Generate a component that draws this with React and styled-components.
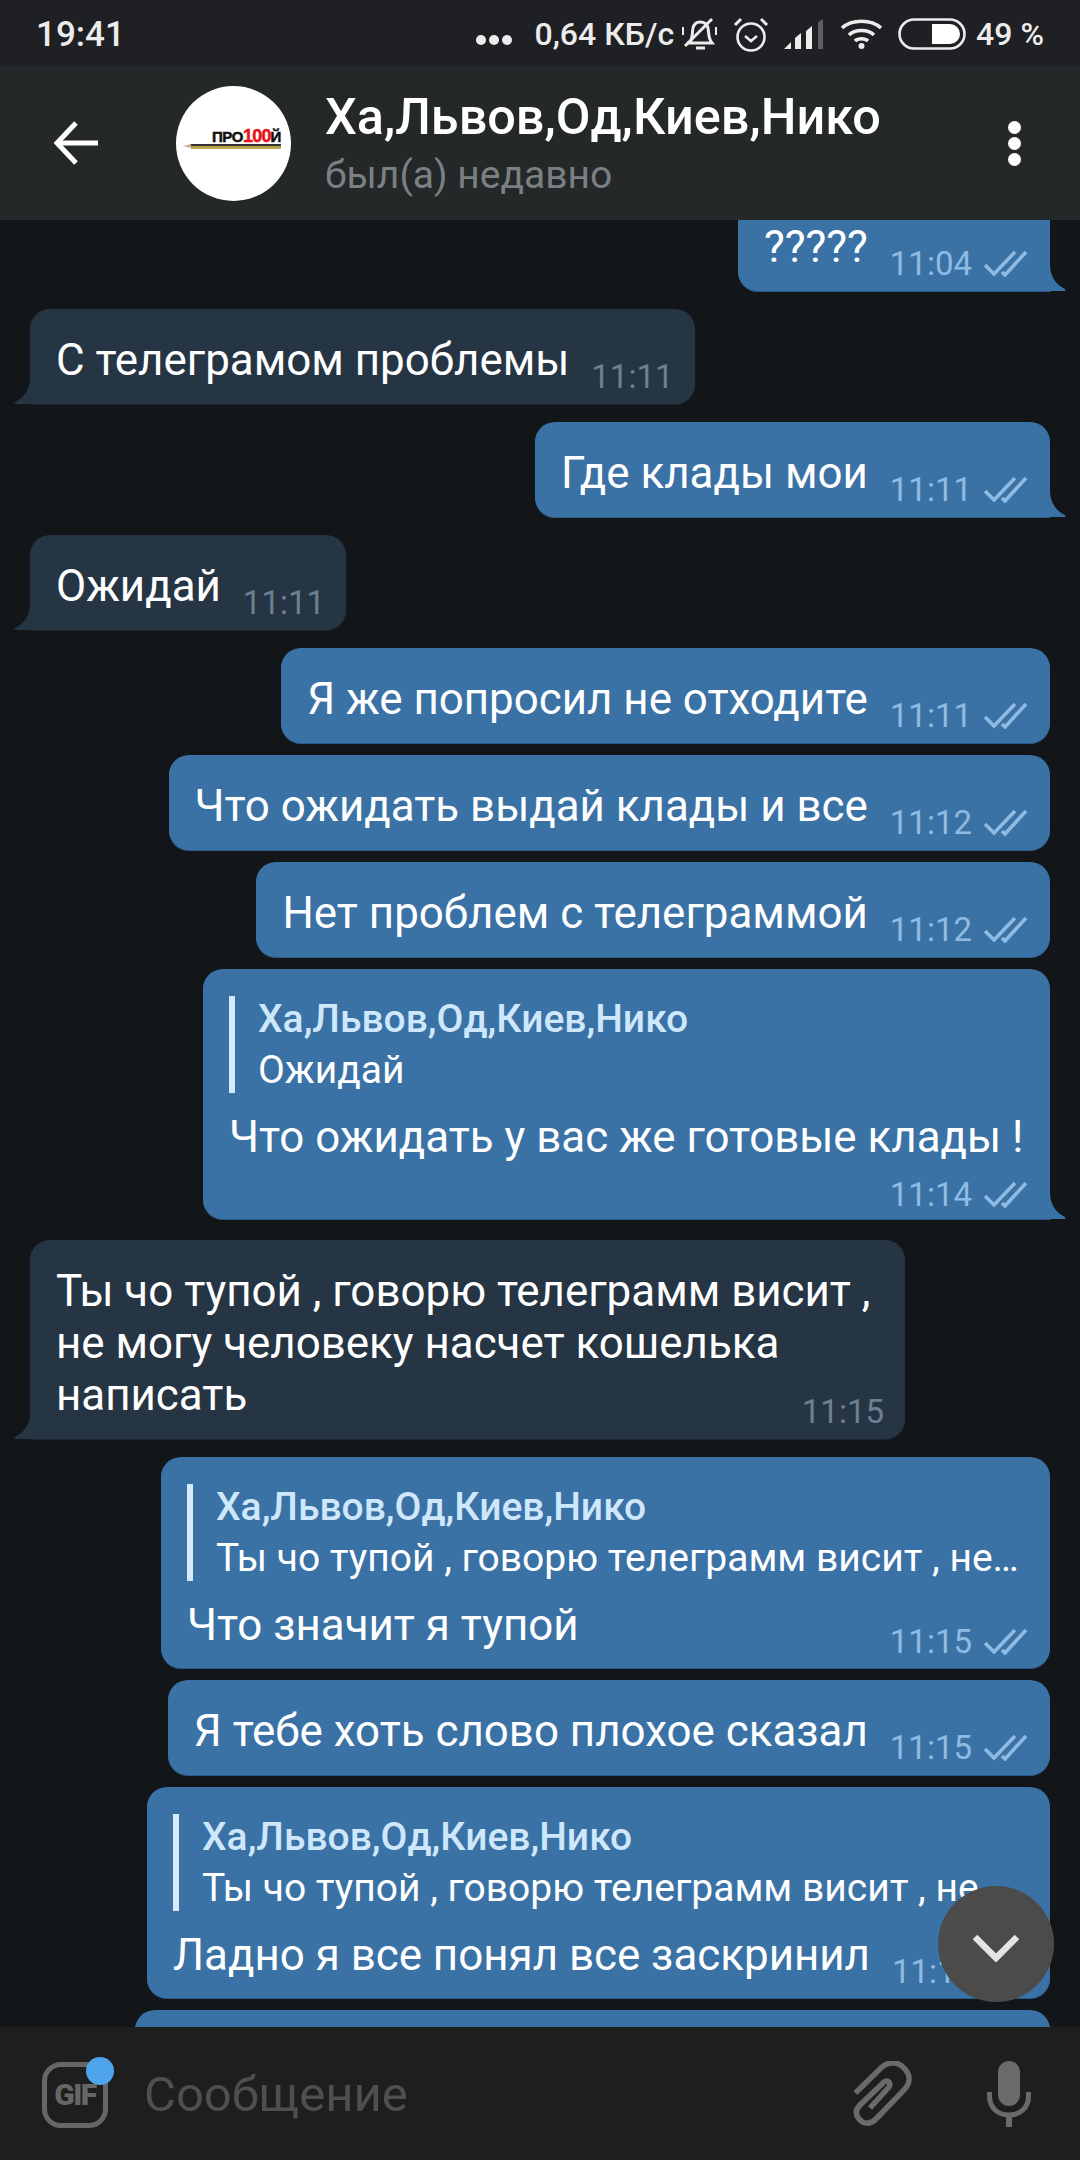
import React from 'react';
import styled, { createGlobalStyle } from 'styled-components';

const Global = createGlobalStyle`
  html, body { margin: 0; padding: 0; background: #121618; }
  * { box-sizing: border-box; }
`;

const Screen = styled.div`
  position: relative;
  width: 1080px;
  height: 2160px;
  display: flex;
  flex-direction: column;
  overflow: hidden;
  background: #121618;
  font-family: Roboto, "Noto Sans", sans-serif;
  color: #fff;
`;

const StatusBar = styled.div`
  height: 66px;
  flex: none;
  background: #1e2023;
  display: flex;
  align-items: center;
  padding: 2px 36px 0;
  color: #ececec;
  font-weight: 500;
`;
const Clock = styled.span`
  font-size: 35px;
  margin-right: auto;
`;
const StatusDots = styled.span`
  display: flex;
  gap: 3px;
  margin-right: 23px;
  margin-top: 12px;
  & i { width: 10px; height: 10px; border-radius: 50%; background: #ececec; display: block; }
`;
const Speed = styled.span`
  font-size: 32px;
  margin-right: 8px;
`;
const Percent = styled.span`
  font-size: 32px;
  margin-left: 10px;
`;
const StatusIcon = styled.svg`
  display: block;
  flex: none;
  margin-right: ${p => p.$mr || 0}px;
`;

const Header = styled.header`
  height: 154px;
  flex: none;
  background: #242829;
  display: flex;
  align-items: center;
  padding: 0 54px;
`;
const BackIcon = styled.svg`
  flex: none;
  margin-right: 78px;
`;
const Avatar = styled.div`
  width: 115px;
  height: 115px;
  flex: none;
  border-radius: 50%;
  background: #fff;
  display: flex;
  flex-direction: column;
  align-items: flex-end;
  justify-content: center;
  padding: 0 10px 8px 7px;
  margin-right: 34px;
`;
const LogoText = styled.span`
  font: 900 15px/12px "Liberation Sans", sans-serif;
  color: #111;
  letter-spacing: -0.4px;
  -webkit-text-stroke: 0.5px currentColor;
  & b { color: #e8101a; font-weight: 900; font-size: 18px; letter-spacing: -0.8px; }
`;
const Pencil = styled.svg`
  display: block;
  margin-top: 1px;
`;
const TitleBlock = styled.div`
  flex: 1;
  min-width: 0;
  display: flex;
  flex-direction: column;
  padding-top: 4px;
`;
const Title = styled.div`
  font-size: 50.4px;
  line-height: 60px;
  font-weight: 500;
`;
const Subtitle = styled.div`
  font-size: 39px;
  line-height: 56px;
  color: #7b8083;
`;
const Dots = styled.div`
  display: flex;
  flex-direction: column;
  gap: 3px;
  margin-right: 5px;
  & i { width: 13px; height: 13px; border-radius: 50%; background: #fff; display: block; }
`;

const Chat = styled.main`
  flex: 1;
  min-height: 0;
  overflow: hidden;
  padding: 0 30px;
`;
const List = styled.div`
  display: flex;
  flex-direction: column;
  margin-top: -24px;
`;
const Bubble = styled.div`
  position: relative;
  align-self: ${p => (p.$out ? 'flex-end' : 'flex-start')};
  width: ${p => (p.$w ? `${p.$w}px` : 'fit-content')};
  margin-top: ${p => p.$mt ?? 12}px;
  padding: 25px ${p => (p.$out ? 22 : 21)}px 18px 26px;
  background: ${p => (p.$out ? '#3a72a6' : '#263544')};
  border-radius: 20px;
  ${p => p.$tail && (p.$out ? 'border-bottom-right-radius: 0;' : 'border-bottom-left-radius: 0;')}
  box-shadow: 0 1px 0 ${p => (p.$out ? '#2d5a86' : '#1b2631')};
  ${p => p.$reply && 'padding-top: 27px; padding-bottom: 17px;'}
`;
const Tail = styled.svg`
  position: absolute;
  bottom: 0;
  ${p => (p.$out ? 'right: -16px;' : 'left: -16px; transform: scaleX(-1);')}
`;
const Line = styled.div`
  display: flex;
  justify-content: space-between;
  align-items: flex-end;
  gap: 22px;
`;
const Text = styled.div`
  font-size: 43.9px;
  line-height: 52px;
  white-space: pre;
`;
const Meta = styled.div`
  flex: none;
  display: flex;
  align-items: center;
  gap: 12px;
  font-size: 33px;
  line-height: 38px;
  margin-bottom: -10px;
  color: ${p => (p.$out ? '#8fbbe2' : '#6d8092')};
  ${p => p.$own && 'justify-content: flex-end; margin-top: 13px; margin-bottom: -12px;'}
`;
const Quote = styled.div`
  border-left: 6px solid #d5ebfd;
  padding-left: 23px;
  margin-bottom: 18px;
  min-width: 0;
`;
const QuoteName = styled.div`
  font-size: 39px;
  line-height: 46px;
  font-weight: 500;
  color: #cfe7fb;
`;
const QuoteText = styled.div`
  font-size: 39px;
  line-height: 45px;
  padding-top: 6px;
  white-space: nowrap;
`;

const InputBar = styled.footer`
  height: 133px;
  flex: none;
  background: #1e1e1e;
  display: flex;
  align-items: center;
  padding: 0 49px 0 42px;
`;
const Gif = styled.div`
  position: relative;
  width: 66px;
  height: 66px;
  flex: none;
  border: 5px solid #666;
  border-radius: 19px;
  display: flex;
  align-items: center;
  justify-content: center;
  font: 900 30px/1 Roboto, sans-serif;
  color: #666;
  margin-right: 36px;
  margin-top: 2px;
  letter-spacing: -1.5px;
`;
const GifDot = styled.span`
  position: absolute;
  top: -10px;
  right: -11px;
  width: 28px;
  height: 28px;
  border-radius: 50%;
  background: #4ea5ee;
`;
const Placeholder = styled.div`
  flex: 1;
  font-size: 49px;
  color: #4f4f4f;
  padding-top: 2px;
`;
const BarIcon = styled.svg`
  flex: none;
  display: block;
  margin-left: ${p => p.$ml || 0}px;
`;
const Fab = styled.div`
  position: absolute;
  left: 938px;
  top: 1886px;
  width: 116px;
  height: 116px;
  border-radius: 50%;
  background: #4b4b4b;
  display: flex;
  align-items: center;
  justify-content: center;
  & svg { margin-top: 8px; }
`;

const Check = () => (
  <svg width="44" height="26" viewBox="0 0 44 26" fill="none" stroke="#8fbbe2" strokeWidth="3.6" style={{ display: 'block' }}>
    <path d="M1 14 L10 23 L31 1" />
    <path d="M18 21 L21 24 L42 1" />
  </svg>
);

const M = ({ out, time }) => (
  <Meta $out={out}>{time}{out && <Check />}</Meta>
);

const TailShape = ({ out }) => (
  <Tail $out={out} width="16" height="26" viewBox="0 0 16 26">
    <path d="M0 0 C0 11 6 20 15 24 Q16 25 15 26 L0 26 Z" fill={out ? '#3a72a6' : '#263544'} />
  </Tail>
);

const NAME = 'Ха,Львов,Од,Киев,Нико';
const QUOTE = 'Ты чо тупой , говорю телеграмм висит , не…';

export default function App() {
  return (
    <Screen>
      <Global />
      <StatusBar>
        <Clock>19:41</Clock>
        <StatusDots><i /><i /><i /></StatusDots>
        <Speed>0,64 КБ/с</Speed>
        <StatusIcon $mr={16} width="35" height="34" viewBox="0 0 35 34" fill="none" stroke="#ececec" strokeWidth="3">
          <path d="M8 25 C11 21 10 15 11 11 C12 7 15 5 18 5 C22 5 25 7 26 11 C27 16 26 21 30 26 L5 26" />
          <path d="M14 31 h9" />
          <path d="M3 29 L30 2" />
          <path d="M1 10 v8 M34 10 v8" strokeWidth="2" />
        </StatusIcon>
        <StatusIcon $mr={15} width="36" height="36" viewBox="0 0 36 36" fill="none" stroke="#ececec" strokeWidth="2.6">
          <circle cx="18" cy="21" r="13.5" />
          <path d="M12 20 L18 25 L24 20" />
          <path d="M2 9 L8 3 M34 9 L28 3" strokeWidth="3" />
        </StatusIcon>
        <StatusIcon $mr={16} width="40" height="30" viewBox="0 0 40 30">
          <path d="M0 30 L7 23 V30 Z M11 30 V19 L17 14 V30 Z M22 30 V12 L28 7 V30 Z" fill="#ececec" />
          <path d="M34 30 V3 L39 0 V30 Z" fill="#5b5d5f" />
        </StatusIcon>
        <StatusIcon $mr={15} width="43" height="32" viewBox="0 0 43 32" fill="none" stroke="#ececec" strokeWidth="3.6">
          <path d="M2 10 C12 1 31 1 41 10" />
          <path d="M9 17 C15 11 28 11 34 17" />
          <path d="M15 23 C18 20 25 20 28 23" />
          <circle cx="21.5" cy="28" r="3" fill="#ececec" stroke="none" />
        </StatusIcon>
        <StatusIcon width="68" height="32" viewBox="0 0 68 32">
          <rect x="1.5" y="1.5" width="65" height="29" rx="14.5" fill="none" stroke="#ececec" strokeWidth="2.6" />
          <path d="M34 6 H52 A10 10 0 0 1 52 26 H34 Z" fill="#fff" />
        </StatusIcon>
        <Percent>49 %</Percent>
      </StatusBar>

      <Header>
        <BackIcon width="44" height="44" viewBox="0 0 44 44" fill="none" stroke="#fff" strokeWidth="5">
          <path d="M44 22 H4" />
          <path d="M22 2 L3 22 L22 42" />
        </BackIcon>
        <Avatar>
          <LogoText>ПРО<b>100</b>Й</LogoText>
          <Pencil width="98" height="5" viewBox="0 0 98 5">
            <path d="M0 2 L8 0 V4 Z" fill="#d9a79a" />
            <rect x="8" y="0" width="90" height="2" fill="#333" />
            <rect x="8" y="2" width="90" height="3" fill="#b9a54a" />
          </Pencil>
        </Avatar>
        <TitleBlock>
          <Title>{NAME}</Title>
          <Subtitle>был(а) недавно</Subtitle>
        </TitleBlock>
        <Dots><i /><i /><i /></Dots>
      </Header>

      <Chat>
        <List>
          <Bubble $out $tail $mt={0}>
            <TailShape out />
            <Line><Text>?????</Text><M out time="11:04" /></Line>
          </Bubble>
          <Bubble $tail $mt={18}>
            <TailShape />
            <Line><Text>С телеграмом проблемы</Text><M time="11:11" /></Line>
          </Bubble>
          <Bubble $out $tail $mt={18}>
            <TailShape out />
            <Line><Text>Где клады мои</Text><M out time="11:11" /></Line>
          </Bubble>
          <Bubble $tail $mt={18}>
            <TailShape />
            <Line><Text>Ожидай</Text><M time="11:11" /></Line>
          </Bubble>
          <Bubble $out $mt={18}>
            <Line><Text>Я же попросил не отходите</Text><M out time="11:11" /></Line>
          </Bubble>
          <Bubble $out>
            <Line><Text>Что ожидать выдай клады и все</Text><M out time="11:12" /></Line>
          </Bubble>
          <Bubble $out>
            <Line><Text>Нет проблем с телеграммой</Text><M out time="11:12" /></Line>
          </Bubble>
          <Bubble $out $tail $reply $w={847}>
            <TailShape out />
            <Quote><QuoteName>{NAME}</QuoteName><QuoteText>Ожидай</QuoteText></Quote>
            <Text>Что ожидать у вас же готовые клады !</Text>
            <Meta $out $own>11:14<Check /></Meta>
          </Bubble>
          <Bubble $tail $mt={21} $w={875}>
            <TailShape />
            <Text>{'Ты чо тупой , говорю телеграмм висит ,\nне могу человеку насчет кошелька'}</Text>
            <Line><Text>написать</Text><M time="11:15" /></Line>
          </Bubble>
          <Bubble $out $reply $w={889} $mt={18}>
            <Quote><QuoteName>{NAME}</QuoteName><QuoteText>{QUOTE}</QuoteText></Quote>
            <Line><Text>Что значит я тупой</Text><M out time="11:15" /></Line>
          </Bubble>
          <Bubble $out>
            <Line><Text>Я тебе хоть слово плохое сказал</Text><M out time="11:15" /></Line>
          </Bubble>
          <Bubble $out $reply $w={903}>
            <Quote><QuoteName>{NAME}</QuoteName><QuoteText>{QUOTE}</QuoteText></Quote>
            <Line><Text>Ладно я все понял все заскринил</Text><M out time="11:15" /></Line>
          </Bubble>
          <Bubble $out $w={915}>
            <Line><Text> </Text></Line>
          </Bubble>
        </List>
      </Chat>

      <InputBar>
        <Gif>GIF<GifDot /></Gif>
        <Placeholder>Сообщение</Placeholder>
        <BarIcon width="60" height="66" viewBox="0 0 60 66" fill="none" stroke="#6a6a6a" strokeWidth="5.5">
          <path d="M2.5 32 L29 6 C36 0 46 1 51 7 C57 13 58 21 52 28 L23 58 C17 64 10 63 6 58 C2 53 3 48 7 44 L31 21 C34 18 39 22 36 26 L17 47" />
        </BarIcon>
        <BarIcon $ml={74} width="44" height="66" viewBox="0 0 44 66" fill="none">
          <rect x="11" y="0" width="22" height="45" rx="11" fill="#6a6a6a" />
          <path d="M2.5 31 V35 C2.5 47 11 54 22 54 C33 54 41.5 47 41.5 35 V31" stroke="#6a6a6a" strokeWidth="5" />
          <rect x="19" y="53" width="6" height="13" fill="#6a6a6a" />
        </BarIcon>
      </InputBar>

      <Fab>
        <svg width="48" height="28" viewBox="0 0 48 28" fill="none" stroke="#e5e5e5" strokeWidth="6.5">
          <path d="M3 3 L24 24 L45 3" />
        </svg>
      </Fab>
    </Screen>
  );
}
